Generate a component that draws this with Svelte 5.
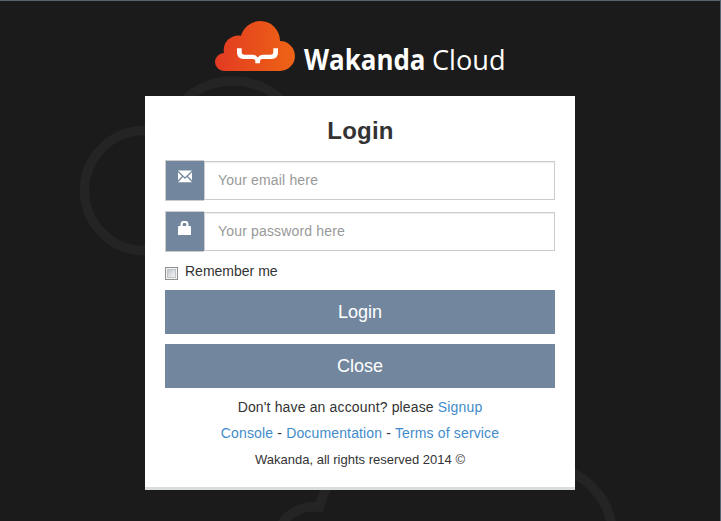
<script>
  let email = $state('');
  let password = $state('');
  let remember = $state(false);
</script>

<div class="page">
  <svg class="backdrop" width="721" height="521" viewBox="0 0 721 521" aria-hidden="true">
    <g fill="none" stroke="#242424" stroke-width="9.5">
      <circle cx="144.500" cy="190.500" r="60" />
      <circle cx="233" cy="151.500" r="70.500" />
      <path d="M275 546 A39 39 0 0 1 319.500 507.200 Q321.500 496 328.500 485" />
      <path d="M541 465.500 A71.500 71.500 0 0 1 612.500 537" />
    </g>
  </svg>

  <header>
    <svg width="300" height="66" viewBox="210 10 300 66" role="img" aria-label="Wakanda Cloud">
      <defs>
        <linearGradient id="flame" gradientUnits="userSpaceOnUse" x1="215" y1="0" x2="295" y2="0">
          <stop offset="0" stop-color="#e33a22" />
          <stop offset="0.5" stop-color="#e84f1b" />
          <stop offset="1" stop-color="#ee6415" />
        </linearGradient>
      </defs>
      <path fill="url(#flame)" d="M224 71 A9 9 0 0 1 224 53 A14.500 14.500 0 0 1 241 35.800 A20 20 0 0 1 260.300 21 A19.900 19.900 0 0 1 280 41.100 A14.900 14.900 0 0 1 280 71 Z" />
      <path fill="#fff" d="M237 48.300 H241.700 V52 Q241.700 54.700 244.500 54.700 H252.500 Q256 54.700 257.700 57.400 Q259.400 54.700 263 54.700 H270.500 Q273.300 54.700 273.300 52 V48.300 H278 V52.500 Q278 58.900 271.500 58.900 H262.500 Q260 58.900 260 61.300 V63.300 H255.300 V61.300 Q255.300 58.900 252.800 58.900 H243.500 Q237 58.900 237 52.500 Z" />
      <text class="brand bold" x="304" y="70" textLength="121.500" lengthAdjust="spacingAndGlyphs">Wakanda</text>
      <text class="brand" x="432" y="70" textLength="73.500" lengthAdjust="spacingAndGlyphs">Cloud</text>
    </svg>
  </header>

  <main>
    <h1>Login</h1>
    <div class="field">
      <span class="addon">
        <svg width="14" height="13" viewBox="0 0 14 13" aria-hidden="true">
          <path fill="#fff" d="M0 .5H14L7 7.200ZM0 2.200 4 6.200 0 10.300ZM14 2.200V10.300L10 6.200ZM5 7 7 9 9 7 14 12.200H0Z" />
        </svg>
      </span>
      <input type="text" placeholder="Your email here" bind:value={email} />
    </div>
    <div class="field">
      <span class="addon">
        <svg width="14" height="14" viewBox="0 0 14 14" aria-hidden="true">
          <path fill="#fff" fill-rule="evenodd" d="M2.500 5V4Q2.500 0 5 0H8Q10.500 0 10.500 4V5H12Q13 5 13 6V13.500Q13 14 12.500 14H.5Q0 14 0 13.500V6Q0 5 1 5ZM4.700 5H8.300V3.500Q8.300 2 7.300 2H5.700Q4.700 2 4.700 3.500Z" />
        </svg>
      </span>
      <input type="password" placeholder="Your password here" bind:value={password} />
    </div>
    <label><input type="checkbox" bind:checked={remember} /><span>Remember me</span></label>
    <button type="button">Login</button>
    <button type="button">Close</button>
    <p>Don't have an account? please <a href="#signup">Signup</a></p>
    <p><a href="#console">Console</a> - <a href="#docs">Documentation</a> - <a href="#terms">Terms of service</a></p>
    <p class="copyright">Wakanda, all rights reserved 2014 ©</p>
  </main>
</div>

<style>
  :global(body) {
    background: #1b1b1b;
  }
  .page, .page * {
    box-sizing: border-box;
  }
  .page {
    position: relative;
    width: 721px;
    height: 521px;
    overflow: hidden;
    background: #1b1b1b;
    border-top: 1px solid #576572;
    border-right: 1px solid #576572;
    font: 14px/20px "Liberation Sans", Arial, sans-serif;
    color: #333;
  }
  .backdrop {
    position: absolute;
    top: -1px;
    left: 0;
  }
  header {
    position: relative;
    display: flex;
    justify-content: center;
    height: 95px;
    padding-top: 9px;
  }
  header svg {
    overflow: visible;
  }
  .brand {
    font: 400 28px "Open Sans", "Noto Sans", sans-serif;
    fill: #fff;
  }
  .bold {
    font-weight: 700;
  }
  main {
    position: relative;
    display: flex;
    flex-direction: column;
    width: 430px;
    height: 394px;
    margin: 0 auto;
    padding: 20px 20px 0;
    background: #fff;
    border-bottom: 3px solid #d9dddd;
  }
  h1 {
    margin: 0 0 14px;
    padding-left: 1px;
    font-size: 24px;
    line-height: 30px;
    letter-spacing: 0.2px;
    text-align: center;
  }
  .field {
    display: flex;
    align-items: center;
    height: 41px;
    margin-bottom: 10px;
  }
  .addon {
    display: flex;
    justify-content: center;
    width: 39px;
    height: 41px;
    padding-top: 9px;
    background: #72879d;
    border: 1px solid #ccc;
    border-right: 0;
  }
  .field input {
    flex: 1;
    min-width: 0;
    height: 39px;
    padding: 0 13px 2px;
    border: 1px solid #ccc;
    border-radius: 0;
    outline: 0;
    font: 14px "Liberation Sans", Arial, sans-serif;
    letter-spacing: 0.17px;
    box-shadow: inset 0 1px 1px rgba(0, 0, 0, 0.075);
  }
  .field input::placeholder {
    color: #999;
    opacity: 1;
  }
  label {
    display: flex;
    height: 29px;
    margin-top: -1px;
  }
  label input {
    appearance: none;
    width: 13px;
    height: 13px;
    margin: 6px 7px 0 0;
    border: 1px solid #8e8f8f;
    background: linear-gradient(135deg, #b4b9c2, #f4f4f4 80%);
    box-shadow: inset 0 0 0 1px #f4f4f4, inset 0 0 0 2px #c0c3c8;
  }
  button {
    height: 44px;
    margin: 0 0 10px;
    padding: 0;
    border: 0;
    background: #72879d;
    color: #fff;
    font: 18px/44px "Liberation Sans", Arial, sans-serif;
  }
  p {
    margin: 0 0 6px;
    text-align: center;
    letter-spacing: 0.15px;
  }
  p:first-of-type {
    margin-top: -1px;
  }
  a {
    color: #428bca;
    text-decoration: none;
  }
  .copyright {
    padding-top: 1px;
    font-size: 13px;
    letter-spacing: 0;
  }
</style>
